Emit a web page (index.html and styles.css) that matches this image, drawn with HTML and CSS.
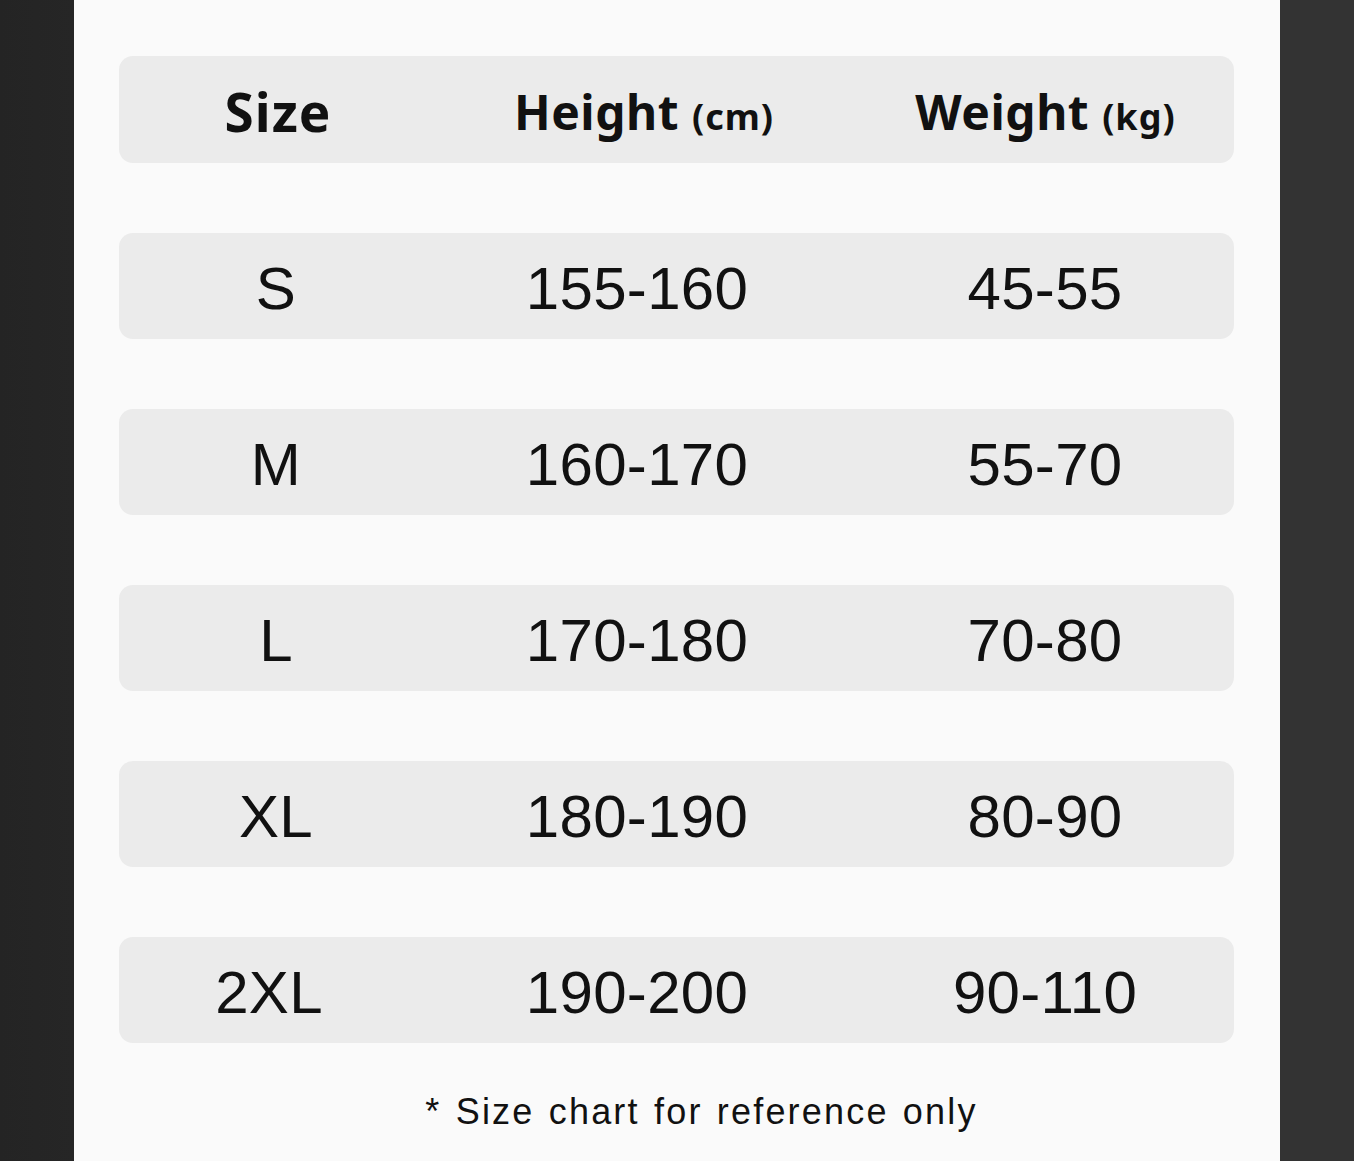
FILE: index.html
```html
<!DOCTYPE html>
<html lang="en">
<head>
<meta charset="utf-8">
<title>Size chart</title>
<link rel="stylesheet" href="styles.css">
</head>
<body>
<main class="panel">
  <div class="row head">
    <div class="cell c1 size-h">Size</div>
    <div class="cell c2">Height <span class="unit">(cm)</span></div>
    <div class="cell c3">Weight <span class="unit">(kg)</span></div>
  </div>
  <div class="row">
    <div class="cell c1">S</div>
    <div class="cell c2">155-160</div>
    <div class="cell c3">45-55</div>
  </div>
  <div class="row">
    <div class="cell c1">M</div>
    <div class="cell c2">160-170</div>
    <div class="cell c3">55-70</div>
  </div>
  <div class="row">
    <div class="cell c1">L</div>
    <div class="cell c2">170-180</div>
    <div class="cell c3">70-80</div>
  </div>
  <div class="row">
    <div class="cell c1">XL</div>
    <div class="cell c2">180-190</div>
    <div class="cell c3">80-90</div>
  </div>
  <div class="row">
    <div class="cell c1 xxl">2XL</div>
    <div class="cell c2">190-200</div>
    <div class="cell c3">90-110</div>
  </div>
  <p class="note">* Size chart for reference only</p>
</main>
</body>
</html>
```

FILE: styles.css
```css
html, body {
  margin: 0;
  padding: 0;
  height: 100%;
}
body {
  background: linear-gradient(to right, #242424 0, #262626 74px, #333333 1280px, #333333 100%);
  font-family: "Liberation Sans", Arial, sans-serif;
  color: #111;
}
.panel {
  box-sizing: border-box;
  margin-left: 74px;
  width: 1206px;
  min-height: 1161px;
  background: #fafafa;
  padding: 56px 46px 0 45px;
  display: flex;
  flex-direction: column;
  gap: 70px;
}
.row {
  height: 106px;
  background: #ebebeb;
  border-radius: 14px;
  display: grid;
  grid-template-columns: 314px 408px 393px;
  align-items: center;
  font-size: 60px;
  line-height: 1;
  padding-top: 6px;
  box-sizing: border-box;
}
.row.head {
  height: 107px;
  font-family: "Noto Sans", "Open Sans", Arial, sans-serif;
  font-size: 48px;
  font-weight: 700;
  padding-top: 4px;
}
.cell {
  text-align: center;
  letter-spacing: 0.3px;
}
.row .c2 { padding-left: 0; }
.row .c3 { padding-left: 15px; }
.row.head .c2 { padding-left: 14px; }
.row.head .c3 { padding-left: 16px; }
.row.head .cell { letter-spacing: 0.5px; }
.row.head .size-h { font-size: 53px; letter-spacing: 1px; padding-left: 4px; }
.xxl { padding-right: 14px; }
.unit {
  font-size: 36px;
  letter-spacing: 1px;
}
.note {
  margin: -22px 0 0;
  text-align: center;
  font-size: 36px;
  letter-spacing: 2.2px;
  word-spacing: 2px;
  padding-left: 50px;
  color: #111;
}
```
